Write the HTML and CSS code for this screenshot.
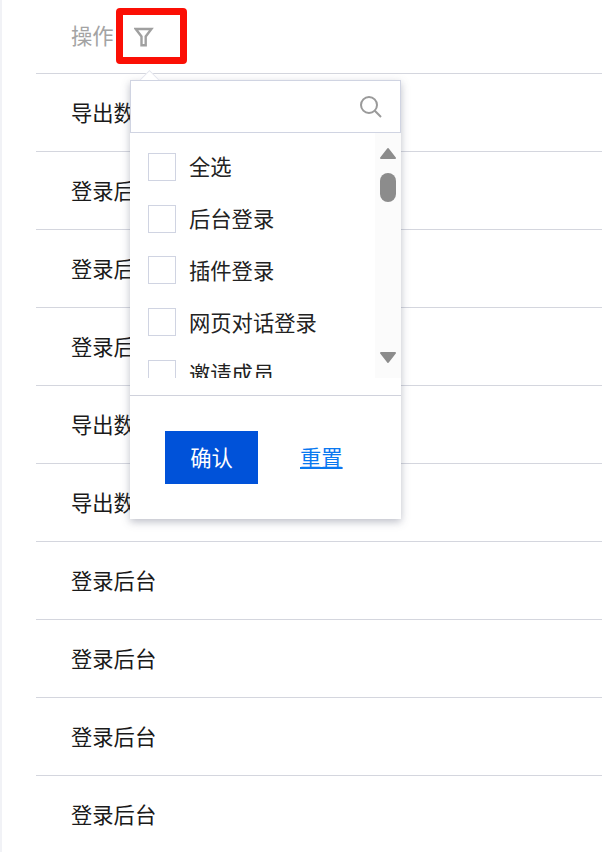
FILE: index.html
```html
<!DOCTYPE html>
<html lang="en">
<head>
    <meta charset="UTF-8">
    <meta name="viewport" content="width=device-width, initial-scale=1.0">
    <title>操作日志</title>
    <link rel="stylesheet" href="styles.css">
</head>
<body>
    <div class="table">
        <div class="row head-row">
            <span class="head-text">操作</span>
            <div class="filter-btn">
                <svg width="20" height="20" viewBox="0 0 20 20" fill="none" stroke="#a0a0a0" stroke-width="2.4">
                    <path d="M1.800 2h15.600l-5.700 7.400V18.300h-4.200V9.400z"/>
                </svg>
            </div>
        </div>
        <div class="row">导出数据</div>
        <div class="row">登录后台</div>
        <div class="row">登录后台</div>
        <div class="row">登录后台</div>
        <div class="row">导出数据</div>
        <div class="row">导出数据</div>
        <div class="row">登录后台</div>
        <div class="row">登录后台</div>
        <div class="row">登录后台</div>
        <div class="row">登录后台</div>
    </div>

    <!-- Filter dropdown -->
    <div class="dropdown">
        <div class="arrow"></div>
        <div class="search-box">
            <svg width="24" height="24" viewBox="0 0 24 24" fill="none" stroke="#9a9a9a" stroke-width="2">
                <circle cx="10" cy="10" r="8"/>
                <path d="M15.800 15.800L22 22"/>
            </svg>
        </div>
        <div class="list-wrap">
            <div class="list">
                <div class="option"><span class="check"></span>全选</div>
                <div class="option"><span class="check"></span>后台登录</div>
                <div class="option"><span class="check"></span>插件登录</div>
                <div class="option"><span class="check"></span>网页对话登录</div>
                <div class="option"><span class="check"></span>邀请成员</div>
            </div>
            <div class="scrollbar">
                <svg class="scroll-arrow" width="18" height="13" viewBox="0 0 18 13" fill="#8c8c8c" stroke="#8c8c8c" stroke-width="2" stroke-linejoin="round">
                    <path d="M9 2L16 11H2z"/>
                </svg>
                <div class="scroll-thumb"></div>
                <svg class="scroll-arrow scroll-down" width="18" height="13" viewBox="0 0 18 13" fill="#8c8c8c" stroke="#8c8c8c" stroke-width="2" stroke-linejoin="round">
                    <path d="M2 2H16L9 11z"/>
                </svg>
            </div>
        </div>
        <div class="footer">
            <button class="confirm-btn">确认</button>
            <a class="reset-link" href="#">重置</a>
        </div>
    </div>
</body>
</html>
```

FILE: styles.css
```css
body {
    font-family: "Noto Sans CJK SC", "Liberation Sans", sans-serif;
    margin: 0;
    padding: 0;
    height: 852px;
    overflow: hidden;
    background: #fff;
    color: #1a1a1a;
    font-size: 21.3px;
    border-left: 2px solid #f1f2f6;
    box-sizing: border-box;
}

.table {
    margin-left: 34px;
}

.row {
    height: 78px;
    box-sizing: border-box;
    border-bottom: 1px solid #d4d6de;
    padding-left: 35px;
    padding-bottom: 2px;
    display: flex;
    align-items: center;
}

.head-row {
    height: 74px;
    padding-bottom: 0;
    color: #a3a3a3;
}

.head-text {
    width: 45px;
    margin-bottom: 5px;
}

.filter-btn {
    width: 71px;
    height: 56px;
    box-sizing: border-box;
    border: 7px solid #fb0f05;
    border-radius: 4px;
    margin-top: -1px;
    display: flex;
    align-items: center;
    padding-left: 11px;
}

.filter-btn svg {
    margin-top: 2px;
}

/* Filter dropdown */
.dropdown {
    position: absolute;
    left: 130px;
    top: 80px;
    width: 271px;
    height: 439px;
    box-sizing: border-box;
    background: #fff;
    box-shadow: 0 3px 8px rgba(70, 75, 100, 0.35);
}

.arrow {
    position: absolute;
    left: 12px;
    top: -7px;
    width: 13px;
    height: 13px;
    background: #fff;
    border: 1px solid #e4e6ee;
    transform: rotate(45deg);
}

.search-box {
    position: relative;
    height: 53px;
    box-sizing: border-box;
    border: 1px solid #d0d4e2;
    background: #fff;
    display: flex;
    align-items: center;
    justify-content: flex-end;
    padding-right: 17px;
}

.list-wrap {
    display: flex;
    height: 245px;
    overflow: hidden;
}

.list {
    flex: 1;
    padding-top: 8px;
    padding-left: 18px;
}

.option {
    height: 51.75px;
    box-sizing: border-box;
    padding-bottom: 2px;
    display: flex;
    align-items: center;
    color: #222;
}

.check {
    width: 28px;
    height: 28px;
    box-sizing: border-box;
    border: 1px solid #d0d4e2;
    margin-top: 2px;
    margin-right: 13px;
    flex-shrink: 0;
}

.scrollbar {
    width: 26px;
    background: #fbfbfb;
    display: flex;
    flex-direction: column;
    align-items: center;
    padding-top: 14px;
    box-sizing: border-box;
}

.scroll-thumb {
    width: 16px;
    height: 29px;
    background: #8c8c8c;
    border-radius: 8px;
    margin-top: 13px;
}

.scroll-down {
    margin-top: 149px;
}

.footer {
    margin-top: 17px;
    border-top: 1px solid #d0d2dc;
    padding: 35px 0 0 35px;
    display: flex;
    align-items: center;
}

.confirm-btn {
    width: 93px;
    height: 53px;
    background: #0052d9;
    color: #fff;
    border: none;
    font-family: inherit;
    font-size: 21.3px;
    padding: 0 0 2px;
}

.reset-link {
    margin-left: 42px;
    margin-bottom: 2px;
    color: #0a78f0;
    text-decoration: underline;
    text-underline-offset: 1px;
}
```
